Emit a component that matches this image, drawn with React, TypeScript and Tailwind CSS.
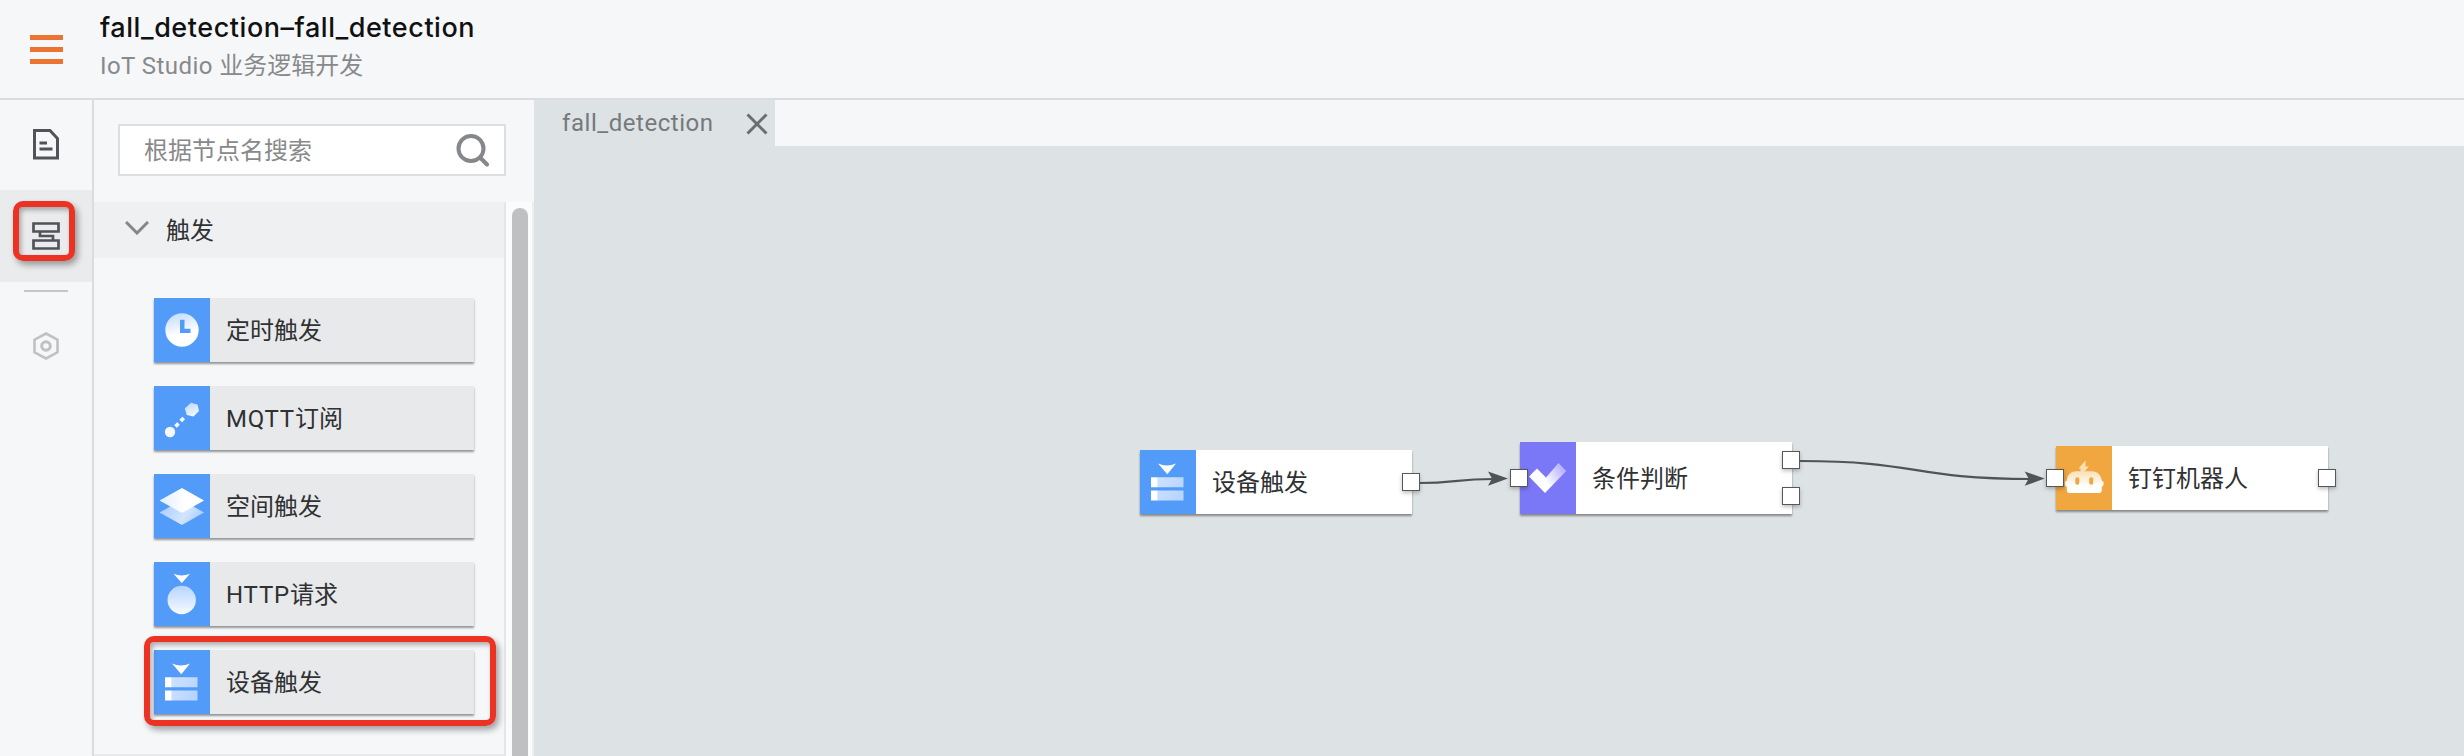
import React from "react";

const ClockIcon = () => (
  <svg width="56" height="64" viewBox="0 0 56 64">
    <defs>
      <linearGradient id="clock" x1="0" y1="0" x2="0.25" y2="1">
        <stop offset="0" stopColor="#bcd8ff" />
        <stop offset="0.7" stopColor="#fff" />
      </linearGradient>
    </defs>
    <circle cx="28" cy="32" r="16.7" fill="url(#clock)" />
    <path d="M26 21.700h4.500v9h6v4.300h-10.500z" fill="#539bf9" />
  </svg>
);

const MqttIcon = () => (
  <svg width="56" height="64" viewBox="0 0 56 64">
    <defs>
      <linearGradient id="mqtt" x1="0.200" y1="0" x2="0.600" y2="1">
        <stop offset="0" stopColor="#bcd8ff" />
        <stop offset="1" stopColor="#f4f9ff" />
      </linearGradient>
    </defs>
    <circle cx="16" cy="46" r="5.200" fill="#f3f8ff" />
    <path d="M21.500 40.500L32 29.500" stroke="#fff" strokeWidth="3.600" strokeDasharray="4.300 3.300" />
    <path d="M37 16.700l6.500 1.700 1.500 6.600-5.500 5.600-6.700-1.600-2-6.500z" fill="url(#mqtt)" />
  </svg>
);

const SpaceIcon = () => (
  <svg width="56" height="64" viewBox="0 0 56 64">
    <defs>
      <linearGradient id="space" x1="0" y1="0.300" x2="1" y2="0.700">
        <stop offset="0" stopColor="#a9cdff" />
        <stop offset="0.600" stopColor="#d3e5ff" />
        <stop offset="1" stopColor="#a0c8ff" />
      </linearGradient>
      <linearGradient id="spaceTop" x1="0" y1="0.500" x2="0.600" y2="0.500">
        <stop offset="0" stopColor="#e3efff" />
        <stop offset="1" stopColor="#fff" />
      </linearGradient>
    </defs>
    <path d="M5.500 38.500L28 26l22 12.500L28 51z" fill="url(#space)" />
    <path d="M5.500 26.500L28 14l22 12.500L28 39z" fill="url(#spaceTop)" />
  </svg>
);

const HttpIcon = () => (
  <svg width="56" height="64" viewBox="0 0 56 64">
    <defs>
      <linearGradient id="http" x1="0" y1="0" x2="0" y2="1">
        <stop offset="0" stopColor="#b5d4ff" />
        <stop offset="1" stopColor="#f8fbff" />
      </linearGradient>
    </defs>
    <path d="M19.500 11.700q8 3.400 16.500 0l-8.200 9.300z" fill="#fff" />
    <circle cx="27.700" cy="38" r="14.200" fill="url(#http)" />
  </svg>
);

const DeviceIcon = () => (
  <svg width="56" height="64" viewBox="0 0 56 64">
    <defs>
      <linearGradient id="device" x1="0" y1="0" x2="1" y2="0.500">
        <stop offset="0" stopColor="#cfe2ff" />
        <stop offset="1" stopColor="#b8d5ff" />
      </linearGradient>
    </defs>
    <path d="M18 13.500q9 3.800 18 0L27.300 24.300z" fill="#fff" />
    <path d="M17.500 27.300h26v10h-26zM17.500 40.500h26v10h-26z" fill="url(#device)" />
    <path d="M11 27.300h6.700v10H11zM11 40.500h6.700v10H11z" fill="#fff" />
  </svg>
);

const CheckIcon = () => (
  <svg width="56" height="72" viewBox="0 0 56 72">
    <defs>
      <linearGradient id="check" x1="0" y1="0.600" x2="1" y2="0.100">
        <stop offset="0.350" stopColor="#fff" />
        <stop offset="1" stopColor="#a9a4fb" />
      </linearGradient>
    </defs>
    <path d="M9 34.500l8-8 9 9L38.500 21l7.800 8L25 51z" fill="url(#check)" />
  </svg>
);

const RobotIcon = () => (
  <svg width="56" height="64" viewBox="0 0 56 64">
    <defs>
      <linearGradient id="robot" x1="0" y1="0" x2="0" y2="1">
        <stop offset="0" stopColor="#fae0b8" />
        <stop offset="0.700" stopColor="#fff" />
      </linearGradient>
    </defs>
    <path d="M29.500 14.500v6h3.300L27.500 27h-3v-4.500h-2z" fill="#fadfb5" />
    <path
      d="M20 25.300h16c5.500 0 9.200 4 9.700 9.200q2 .3 2 3t-2 3.300v3.500q0 2.700-2.700 2.700H13.500q-2.700 0-2.700-2.700v-3.500q-2-.5-2-3.300t2-3c.5-5.200 4-9.200 9.200-9.200z"
      fill="url(#robot)"
    />
    <rect x="19.300" y="31.300" width="4" height="7.400" rx="2" fill="#f0a73f" />
    <rect x="33.200" y="31.300" width="4" height="7.400" rx="2" fill="#f0a73f" />
  </svg>
);

const triggers = [
  { latin: "", name: "定时触发", icon: <ClockIcon /> },
  { latin: "MQTT", name: "订阅", icon: <MqttIcon /> },
  { latin: "", name: "空间触发", icon: <SpaceIcon /> },
  { latin: "HTTP", name: "请求", icon: <HttpIcon /> },
  { latin: "", name: "设备触发", icon: <DeviceIcon />, marked: true },
];

const Port = ({ className }: { className: string }) => (
  <span
    className={`absolute size-[18px] border border-[#55585a] bg-white shadow-[0_2px_4px_rgba(0,0,0,0.25)] ${className}`}
  />
);

const Node = ({
  name,
  icon,
  className,
  iconClass,
  children,
}: {
  name: string;
  icon: React.ReactNode;
  className: string;
  iconClass: string;
  children: React.ReactNode;
}) => (
  <div
    className={`absolute flex w-[272px] items-center bg-white shadow-[0_2px_2px_rgba(0,0,0,0.4)] ${className}`}
  >
    <div className={`h-full w-14 shrink-0 ${iconClass}`}>{icon}</div>
    <span className="pt-[2px] pl-4 text-2xl leading-8 text-[#2f3133]">{name}</span>
    {children}
  </div>
);

export default function App() {
  return (
    <div className="flex h-[756px] w-[2464px] flex-col overflow-hidden bg-[#f6f7f9] font-['Roboto','Noto_Sans_CJK_SC',sans-serif]">
      <header className="flex h-[100px] shrink-0 border-b-2 border-[#dadcde]">
        <div className="flex w-[100px] flex-col gap-[7px] pt-[35px] pl-[30px]">
          <span className="h-[5px] w-[33px] bg-[#ec7433]" />
          <span className="h-[5px] w-[33px] bg-[#ec7433]" />
          <span className="h-[5px] w-[33px] bg-[#ec7433]" />
        </div>
        <div className="pt-3">
          <h1 className="h-8 font-['Inter','Noto_Sans_CJK_SC',sans-serif] text-[27px] leading-8 font-medium tracking-[0.55px] whitespace-nowrap text-[#111]">
            fall_detection–fall_detection
          </h1>
          <p className="mt-1 h-9 text-2xl leading-9 whitespace-nowrap text-[#88898b]">
            <span className="tracking-[0.45px]">IoT Studio </span>业务逻辑开发
          </p>
        </div>
      </header>

      <div className="flex min-h-0 flex-1">
        <nav className="flex w-[94px] shrink-0 flex-col border-r-2 border-[#dadcde]">
          <div className="flex h-[90px] justify-center pt-[29px]">
            <svg width="26" height="31" viewBox="0 0 26 31" fill="none" stroke="#515356" strokeWidth="3">
              <path d="M1.500 1.500h15.500l7.500 8v19.500h-23zM6.500 14h7.500M6.500 20h13" />
            </svg>
          </div>
          <div className="relative flex h-[92px] justify-center bg-[#eaebec] pt-8">
            <svg width="28" height="28" viewBox="0 0 28 28" fill="none" stroke="#515356" strokeWidth="2.700">
              <path d="M1.500 1.500h25v8h-25zM1.500 18.500h25v8h-25zM8 9.500v4.500h13v4.500" />
            </svg>
            <span className="absolute top-[11px] left-[13px] h-[60px] w-[62px] rounded-[10px] border-6 border-[#ec3323] shadow-[3px_4px_6px_rgba(0,0,0,0.35),inset_2px_3px_5px_rgba(0,0,0,0.3)]" />
          </div>
          <div className="mt-2 ml-6 h-[2px] w-11 bg-[#c3c5c7]" />
          <svg className="mt-10 ml-8" width="28" height="28" viewBox="0 0 28 28" fill="none" stroke="#bfc1c3" strokeWidth="2.600">
            <path d="M14 1.500l11.500 6.200v12.600L14 26.500 2.500 20.300V7.700z" />
            <circle cx="14" cy="14" r="4.300" strokeWidth="3" />
          </svg>
        </nav>

        <aside className="flex w-[440px] shrink-0 flex-col">
          <div className="mx-6 mt-6 flex h-[52px] w-[388px] items-center justify-between border-2 border-[#dcdee0] bg-white pr-[14px] pl-6">
            <span className="pt-[2px] text-2xl leading-8 text-[#88898b]">根据节点名搜索</span>
            <svg width="34" height="34" viewBox="0 0 34 34" fill="none" stroke="#85878a" strokeWidth="4">
              <circle cx="15" cy="15.500" r="12.500" />
              <path d="M24 24.500l7 7" strokeLinecap="round" />
            </svg>
          </div>
          <div className="mt-[26px] flex min-h-0 flex-1">
            <div className="flex w-[412px] flex-col border-r-2 border-[#e4e6e8]">
              <div className="flex h-14 shrink-0 items-center bg-[#eff0f2] pl-[31px]">
                <svg width="24" height="14" viewBox="0 0 24 14" fill="none" stroke="#85878a" strokeWidth="3" className="-mt-[5px]">
                  <path d="M1 1l11 11L23 1" />
                </svg>
                <span className="pt-[2px] pl-[17px] text-2xl leading-8 text-[#2f3133]">触发</span>
              </div>
              <div className="flex flex-1 flex-col gap-6 border-b-2 border-[#e8e9eb] pt-10 pl-[60px]">
                {triggers.map((t) => (
                  <div
                    key={t.name}
                    className="relative flex h-16 w-80 shrink-0 items-center bg-[#e8e9ea] shadow-[0_2px_2px_rgba(0,0,0,0.4)]"
                  >
                    <div className="h-full w-14 bg-[#539bf9]">{t.icon}</div>
                    <span className="pt-[2px] pl-4 text-2xl leading-8 text-[#2f3133]">
                      {t.latin && <span className="tracking-[0.8px]">{t.latin}</span>}
                      {t.name}
                    </span>
                    {t.marked && (
                      <span className="absolute -top-[14px] -left-[10px] h-[90px] w-[352px] rounded-[10px] border-6 border-[#ec3323] shadow-[3px_4px_6px_rgba(0,0,0,0.35),inset_2px_3px_5px_rgba(0,0,0,0.3)]" />
                    )}
                  </div>
                ))}
              </div>
            </div>
            <div className="w-7 border-r-2 border-[#eceef0] bg-[#fafbfb] pt-[6px] pl-[6px]">
              <div className="h-full w-4 rounded-t-full bg-[#bfc0c2]" />
            </div>
          </div>
        </aside>

        <main className="flex min-w-0 flex-1 flex-col bg-[#dde2e4]">
          <div className="flex h-[46px] shrink-0">
            <div className="flex w-[241px] items-center pl-7">
              <span className="-mt-[1px] w-[184px] text-2xl leading-8 tracking-[0.55px] text-[#77797c]">fall_detection</span>
              <svg width="22" height="22" viewBox="0 0 22 22" fill="none" stroke="#6b6e71" strokeWidth="3" className="mt-[2px]">
                <path d="M1.500 1.500l19 19M20.500 1.500l-19 19" />
              </svg>
            </div>
            <div className="flex-1 bg-[#f6f7f9]" />
          </div>
          <div className="relative flex-1">
            <Node name="设备触发" icon={<DeviceIcon />} className="top-[304px] left-[606px] h-16" iconClass="bg-[#539bf9]">
              <Port className="top-[23px] left-[262px]" />
            </Node>
            <Node name="条件判断" icon={<CheckIcon />} className="top-[296px] left-[986px] h-[72px]" iconClass="bg-[#7b78f8]">
              <Port className="top-[27px] -left-[10px]" />
              <Port className="top-[9px] left-[262px]" />
              <Port className="top-[45px] left-[262px]" />
            </Node>
            <Node name="钉钉机器人" icon={<RobotIcon />} className="top-[300px] left-[1522px] h-16" iconClass="bg-[#f0a73f]">
              <Port className="top-[23px] -left-[10px]" />
              <Port className="top-[23px] left-[262px]" />
            </Node>
            <svg className="absolute top-[296px] left-[886px]" width="640" height="72" viewBox="0 0 640 72" fill="none">
              <path d="M0 41c35 0 35-4 74-4M380 19c120 0 110 18 232 18" stroke="#515456" strokeWidth="2.200" />
              <path d="M68 29.500l20 7-20 7.300 4-7.300zM604.700 29.500l20 7-20 7.300 4-7.300z" fill="#515456" />
            </svg>
          </div>
        </main>
      </div>
    </div>
  );
}
